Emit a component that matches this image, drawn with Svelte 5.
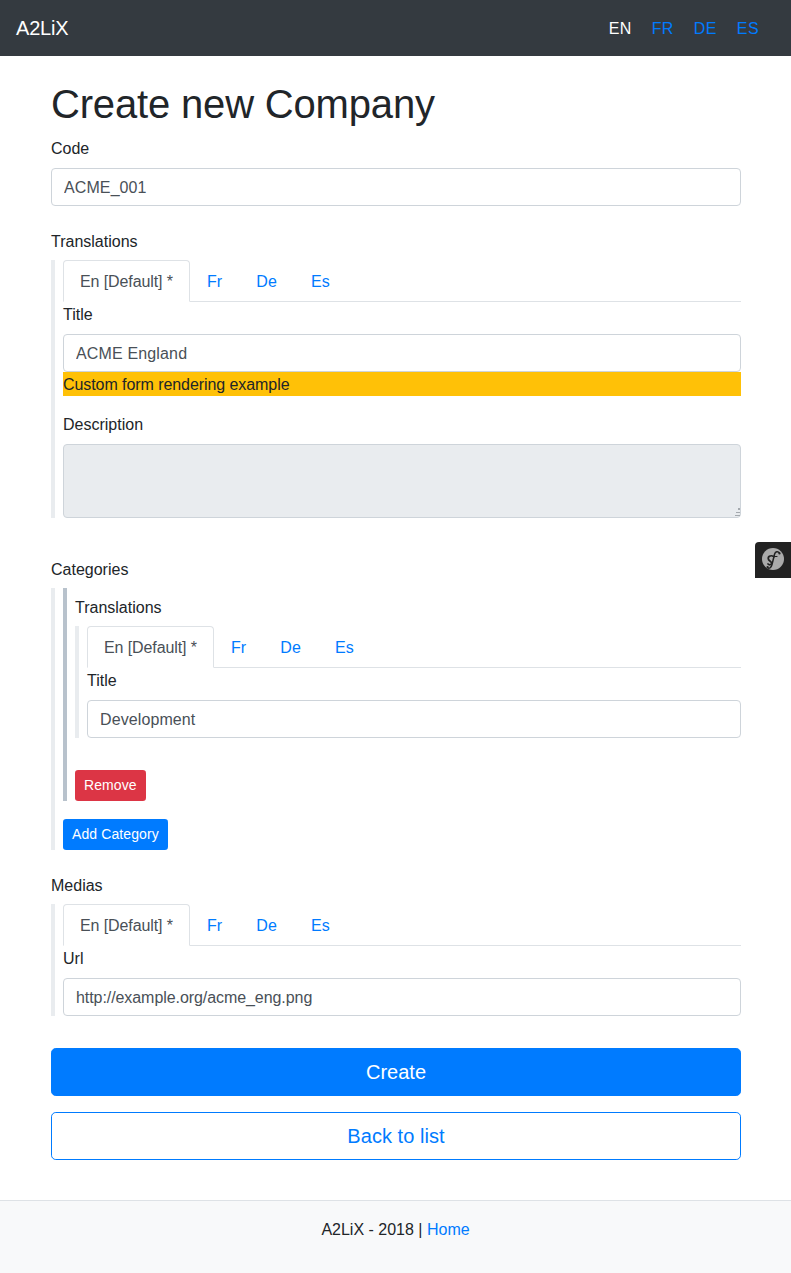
<script lang="ts">
	const languages = ['Fr', 'De', 'Es'];
	const navLinks = ['EN', 'FR', 'DE', 'ES'];
</script>

{#snippet tabs()}
	<ul class="tabs">
		<li><a class="tab active" href="#en">En [Default] *</a></li>
		{#each languages as lang}
			<li><a class="tab" href="#{lang}">{lang}</a></li>
		{/each}
	</ul>
{/snippet}

<nav class="navbar">
	<a class="brand" href="#home">A2LiX</a>
	<ul class="locales">
		{#each navLinks as link, i}
			<li><a class="locale" class:current={i === 0} href="#{link}">{link}</a></li>
		{/each}
	</ul>
</nav>

<main class="container">
	<h1>Create new Company</h1>
	<form>
		<div class="field">
			<label for="code">Code</label>
			<input id="code" class="wide" type="text" value="ACME_001" />
		</div>

		<div class="field field-textarea">
			<span class="label">Translations</span>
			<div class="block">
				{@render tabs()}
				<label for="title">Title</label>
				<input id="title" class="wider" type="text" value="ACME England" />
				<div class="custom">Custom form rendering example</div>
				<label for="description">Description</label>
				<textarea id="description" disabled></textarea>
			</div>
		</div>

		<div class="field">
			<span class="label">Categories</span>
			<div class="block">
				<div class="category">
					<span class="label">Translations</span>
					<div class="block nested">
						{@render tabs()}
						<label for="cat-title">Title</label>
						<input id="cat-title" class="wide" type="text" value="Development" />
					</div>
					<button type="button" class="btn-sm danger">Remove</button>
				</div>
				<button type="button" class="btn-sm primary">Add Category</button>
			</div>
		</div>

		<div class="field medias">
			<span class="label">Medias</span>
			<div class="block">
				{@render tabs()}
				<label for="url">Url</label>
				<input id="url" class="narrow" type="text" value="http://example.org/acme_eng.png" />
			</div>
		</div>

		<button type="button" class="btn-lg solid">Create</button>
		<a class="btn-lg outline" href="#list">Back to list</a>
	</form>
</main>

<footer>A2LiX - 2018 | <a href="#home">Home</a></footer>

<div class="sf-toolbar" aria-label="Symfony toolbar">
	<svg viewBox="0 0 36 36" width="36" height="36" aria-hidden="true">
		<circle cx="18" cy="17" r="11" fill="#aaa" />
		<g fill="none" stroke="#222" stroke-linecap="round">
			<path d="M24.5 11C23 9 20.5 9.5 19.6 12L17 22.5C16.2 26 14 27 12.5 25.5" stroke-width="1.5" />
			<path d="M18 14.5H22" stroke-width="1.1" />
			<path d="M19 14.5C15 12.5 12.5 15 13.5 17.5C14.5 19.5 17 19.5 16.5 21.5C16 23 14 23.2 13 22" stroke-width="1.7" />
		</g>
		<circle cx="24.5" cy="11.5" r="1.1" fill="#222" />
		<circle cx="12.6" cy="25" r="1.1" fill="#222" />
	</svg>
</div>

<style>
	:global(body) {
		margin: 0;
		background: #fff;
		color: #212529;
		font-family: 'Liberation Sans', Arial, sans-serif;
		font-size: 16px;
		line-height: 24px;
	}
	a {
		color: #007bff;
		text-decoration: none;
	}
	ul {
		list-style: none;
		margin: 0;
		padding: 0;
		display: flex;
	}
	.navbar {
		display: flex;
		align-items: center;
		justify-content: space-between;
		height: 56px;
		box-sizing: border-box;
		padding: 0 24px 0 16px;
		background: #343a40;
	}
	.brand {
		color: #fff;
		font-size: 20px;
		line-height: 30px;
		letter-spacing: -0.2px;
	}
	.locale {
		display: block;
		padding: 9px 8px 7px;
		margin-left: 4px;
		color: #007bff;
		letter-spacing: 0.4px;
	}
	.locale.current {
		color: #fff;
	}
	.container {
		width: 690px;
		margin: 0 auto;
		padding-left: 1px;
	}
	h1 {
		margin: 24px 0 8px;
		font-size: 40px;
		line-height: 48px;
		font-weight: 400;
		letter-spacing: -0.17px;
	}
	label {
		display: block;
		padding-top: 1px;
		margin-bottom: 7px;
	}
	.label {
		display: block;
		padding-top: 2px;
		margin-bottom: 6px;
	}
	.field {
		margin-bottom: 22px;
	}
	.field-textarea {
		margin-bottom: 38px;
	}
	.medias {
		margin-bottom: 32px;
	}
	input,
	textarea {
		display: block;
		box-sizing: border-box;
		width: 100%;
		height: 38px;
		padding: 7px 12px 5px;
		margin: 0;
		border: 1px solid #ced4da;
		border-radius: 4px;
		background: #fff;
		color: #495057;
		font: inherit;
	}
	.wide {
		letter-spacing: 0.1px;
	}
	.wider {
		letter-spacing: 0.15px;
	}
	.narrow {
		letter-spacing: -0.07px;
	}
	textarea {
		height: 74px;
		background: #e9ecef;
		resize: vertical;
	}
	/* grip drawn as three short dashes, like the reference */
	textarea::-webkit-resizer {
		background-color: transparent;
		background-repeat: no-repeat;
		background-image: linear-gradient(#a4a9ae, #a4a9ae), linear-gradient(#a4a9ae, #a4a9ae), linear-gradient(#a4a9ae, #a4a9ae);
		background-size: 2px 2px, 4px 1px, 5px 1px;
		background-position: right 0 top 6px, right 0 top 10px, right 0 top 13px;
	}
	.block {
		border-left: 4px solid #e9ecef;
		padding-left: 8px;
	}
	.nested {
		margin-bottom: 32px;
	}
	.category {
		border-left: 4px solid #b8c2cc;
		padding: 6px 0 0 8px;
		margin-bottom: 18px;
	}
	.tabs {
		border-bottom: 1px solid #dee2e6;
	}
	.tab {
		display: block;
		padding: 9px 16px 7px;
		margin-bottom: -1px;
		border: 1px solid transparent;
		border-radius: 4px 4px 0 0;
		letter-spacing: 0.15px;
	}
	.tab.active {
		color: #495057;
		background: #fff;
		border-color: #dee2e6 #dee2e6 #fff;
		letter-spacing: -0.1px;
	}
	.custom {
		box-sizing: border-box;
		height: 24px;
		padding-top: 1px;
		background: #ffc107;
		margin-bottom: 16px;
		letter-spacing: -0.07px;
	}
	.btn-sm {
		display: block;
		padding: 4px 8px;
		border: 1px solid transparent;
		border-radius: 3.2px;
		color: #fff;
		font: inherit;
		font-size: 14px;
		line-height: 21px;
		letter-spacing: 0.1px;
	}
	.danger {
		background: #dc3545;
	}
	.primary {
		background: #007bff;
	}
	.btn-lg {
		display: block;
		box-sizing: border-box;
		width: 100%;
		height: 48px;
		padding: 8px 16px;
		border: 1px solid #007bff;
		border-radius: 4.8px;
		font: inherit;
		font-size: 20px;
		line-height: 30px;
		text-align: center;
	}
	.solid {
		background: #007bff;
		color: #fff;
		margin-bottom: 16px;
	}
	.outline {
		background: #fff;
		color: #007bff;
		letter-spacing: 0.05px;
	}
	footer {
		margin-top: 40px;
		height: 73px;
		box-sizing: border-box;
		padding-top: 17px;
		border-top: 1px solid #dee2e6;
		background: #f8f9fa;
		text-align: center;
	}
	.sf-toolbar {
		position: fixed;
		top: 542px;
		right: 0;
		width: 36px;
		height: 36px;
		background: #222;
		border-top-left-radius: 4px;
	}
	svg {
		display: block;
	}
</style>
